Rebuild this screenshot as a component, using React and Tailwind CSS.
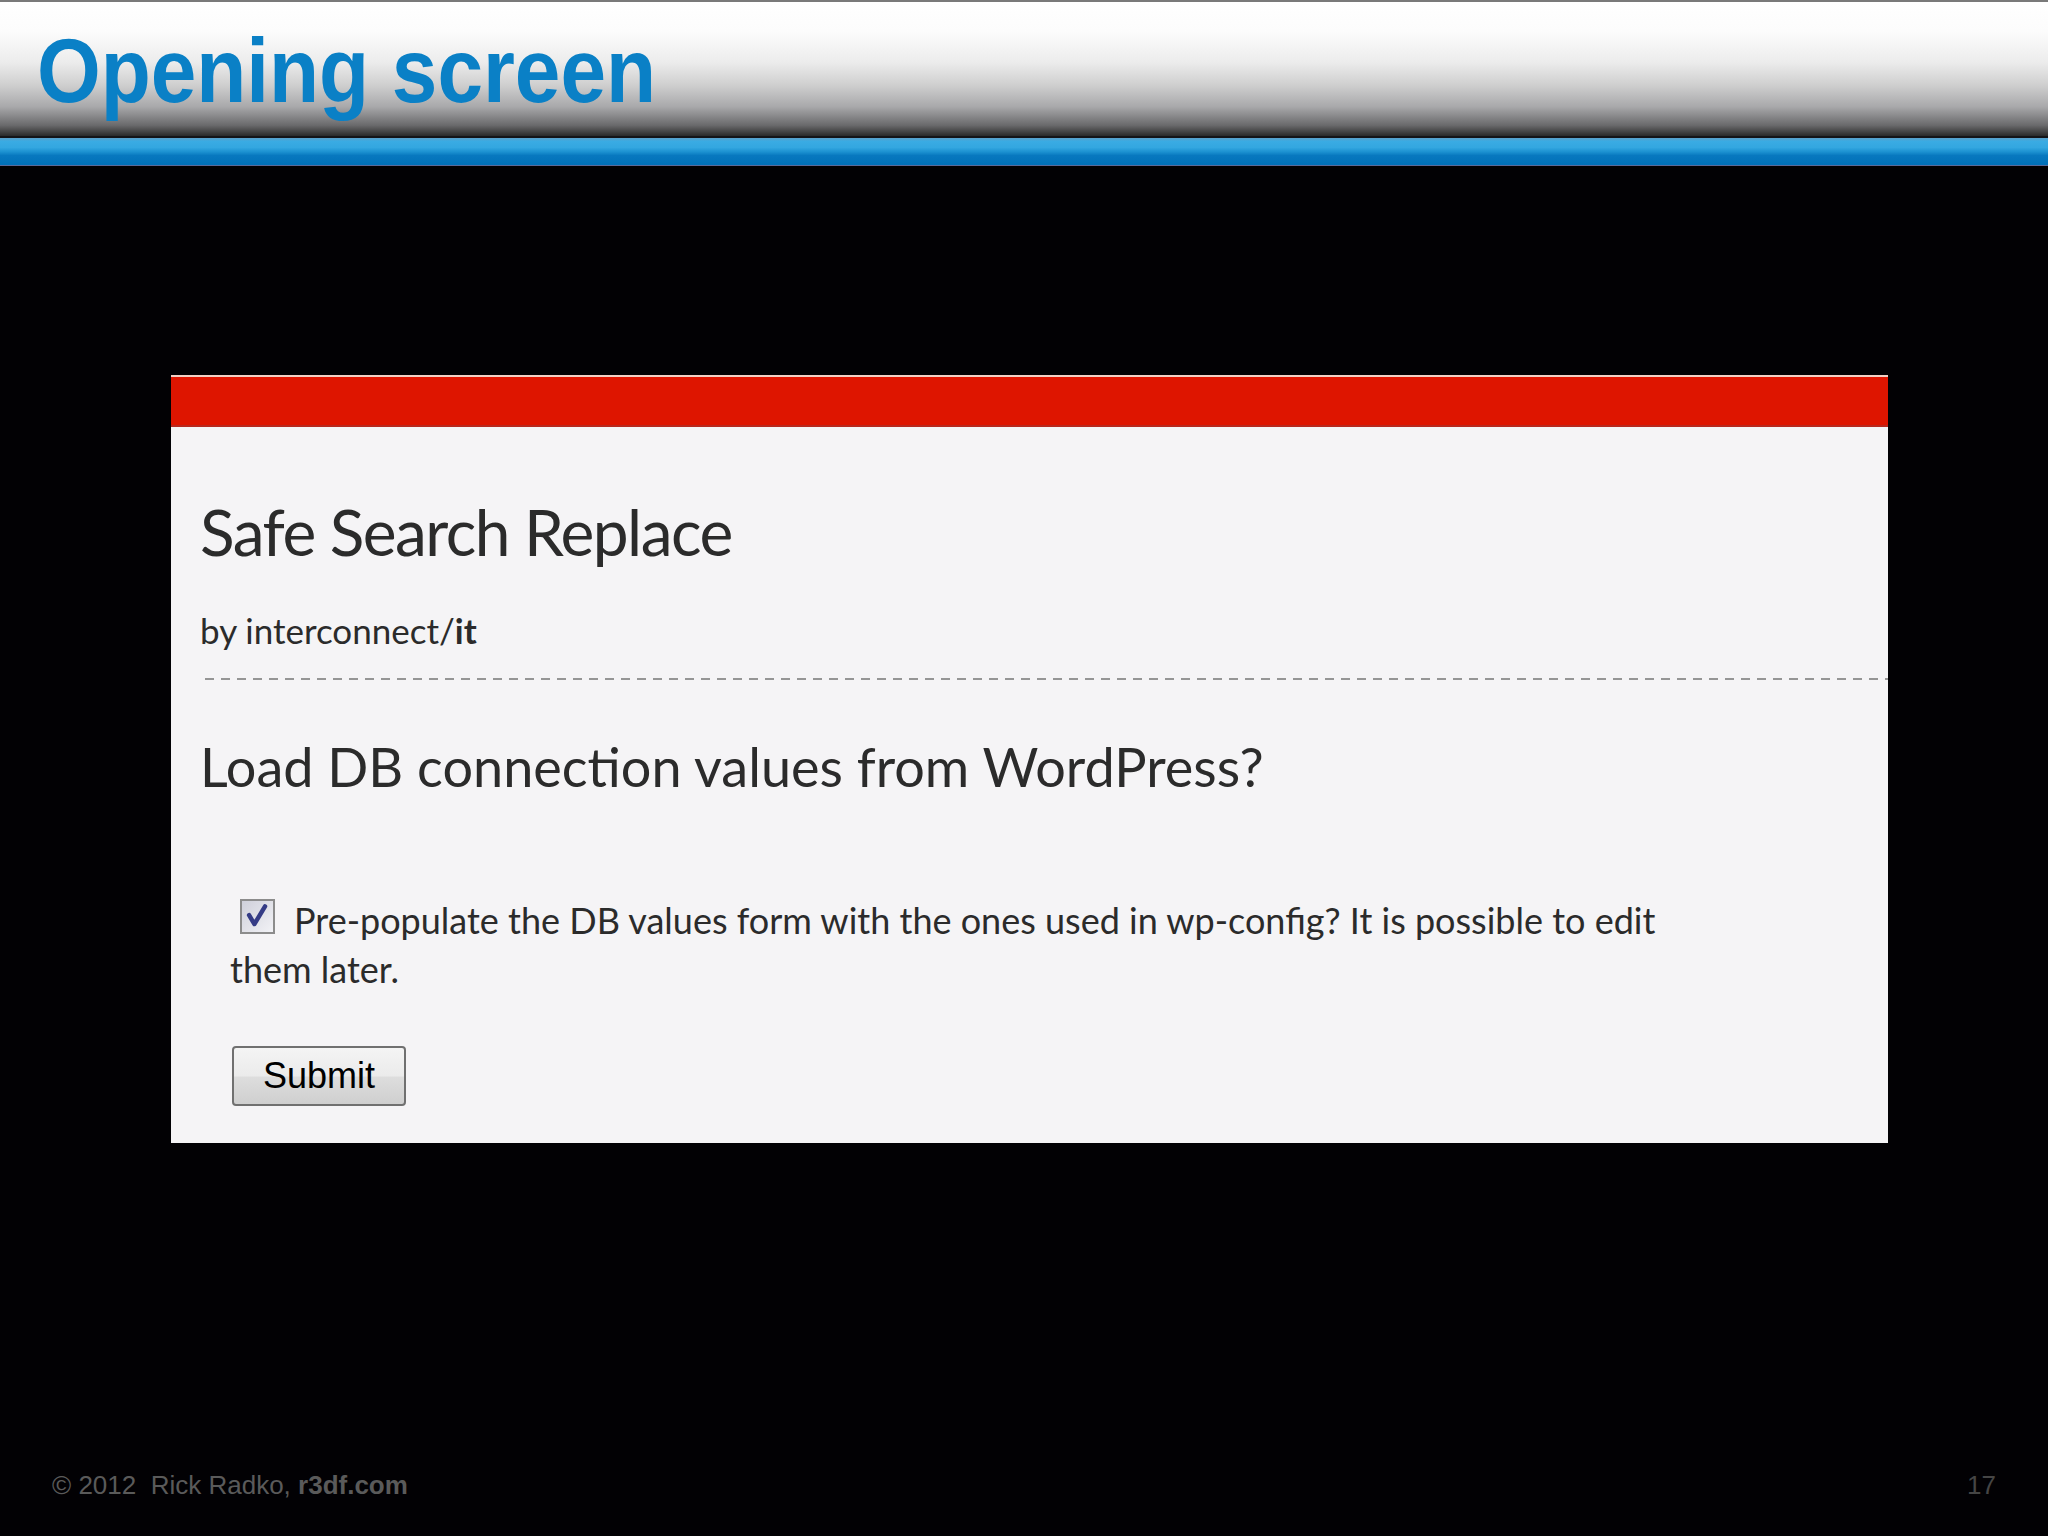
import React from 'react'

function CheckBox() {
  return (
    <span className="inline-block align-baseline relative w-[35px] h-[35px] mr-[19px] ml-[10px] border-2 border-[#8c8c8c] bg-[linear-gradient(135deg,#cfd0da,#f2f2f6)]">
      <svg viewBox="0 0 35 35" className="absolute inset-0 w-full h-full">
        <path d="M8 16 L14 26 L26 6" fill="none" stroke="#353c86" strokeWidth="5" strokeLinecap="round" strokeLinejoin="round" />
      </svg>
    </span>
  )
}

export default function App() {
  return (
    <div className="w-[2048px] h-[1536px] bg-[#020104] flex flex-col overflow-hidden">
      {/* slide header */}
      <div className="h-[136px] border-t-2 border-[#7a7a7a] bg-[linear-gradient(to_bottom,#ffffff_0%,#fcfcfc_22%,#ececec_45%,#cfcfcf_62%,#a9a9ab_78%,#6a6a6c_92%,#2a2a2a_100%)] pl-[37px] pt-[23px]">
        <h1 className="font-['Liberation_Sans',sans-serif] font-bold text-[91px] leading-none text-[#0a80c6] origin-left scale-x-[0.9] whitespace-nowrap">
          Opening screen
        </h1>
      </div>
      <div className="h-[2px] bg-[#141418]" />
      <div className="h-[28px] bg-[linear-gradient(to_bottom,#5b9fc8_0%,#3aabe3_12%,#33a7e0_35%,#1b90d0_52%,#0878bf_65%,#0070b8_100%)] border-b border-[#5a6a9a]" />

      {/* main area */}
      <div className="flex-1 pl-[171px] pt-[209px]">
        <div className="w-[1717px] h-[768px] bg-[#f5f4f6] flex flex-col font-['Lato','Open_Sans',sans-serif] text-[#2b2b2b]">
          <div className="h-[2px] bg-[#f3cfc4]" />
          <div className="h-[50px] bg-[#de1500] border-b-2 border-[#b8281e]" />
          <div className="pl-[29px] pt-[73px]">
            <h2 className="text-[64px] leading-none tracking-[-1.5px]">Safe Search Replace</h2>
            <p className="text-[35px] leading-none mt-[49px]">
              by interconnect/<span className="font-bold">it</span>
            </p>
          </div>
          <div className="ml-[34px] mt-[30px] h-[2px] bg-[linear-gradient(to_right,#959595_58%,transparent_0)] bg-[length:16px_2px] bg-repeat-x" />
          <h3 className="pl-[29px] mt-[60px] text-[54px] leading-none">Load DB connection values from WordPress?</h3>
          <p className="pl-[59px] pr-[200px] mt-[102px] text-[36px] leading-[49px]">
            <CheckBox />
            Pre-populate the DB values form with the ones used in wp-config? It is possible to edit them later.
          </p>
          <div className="pl-[61px] mt-[52px]">
            <button className="w-[174px] h-[60px] rounded-[4px] border-2 border-[#707070] bg-[linear-gradient(to_bottom,#f4f4f4_0%,#ebebeb_50%,#dddddd_52%,#cfcfcf_100%)] font-['Liberation_Sans',sans-serif] text-[36px] text-black leading-none">
              Submit
            </button>
          </div>
        </div>
      </div>

      {/* footer */}
      <div className="h-[70px] flex items-start justify-between pl-[52px] pr-[52px] font-['Liberation_Sans',sans-serif] text-[26px] -mt-[2px]">
        <span className="text-[#5a5a5a]">
          © 2012&nbsp; Rick Radko, <span className="font-bold">r3df.com</span>
        </span>
        <span className="text-[#454545]">17</span>
      </div>
    </div>
  )
}
